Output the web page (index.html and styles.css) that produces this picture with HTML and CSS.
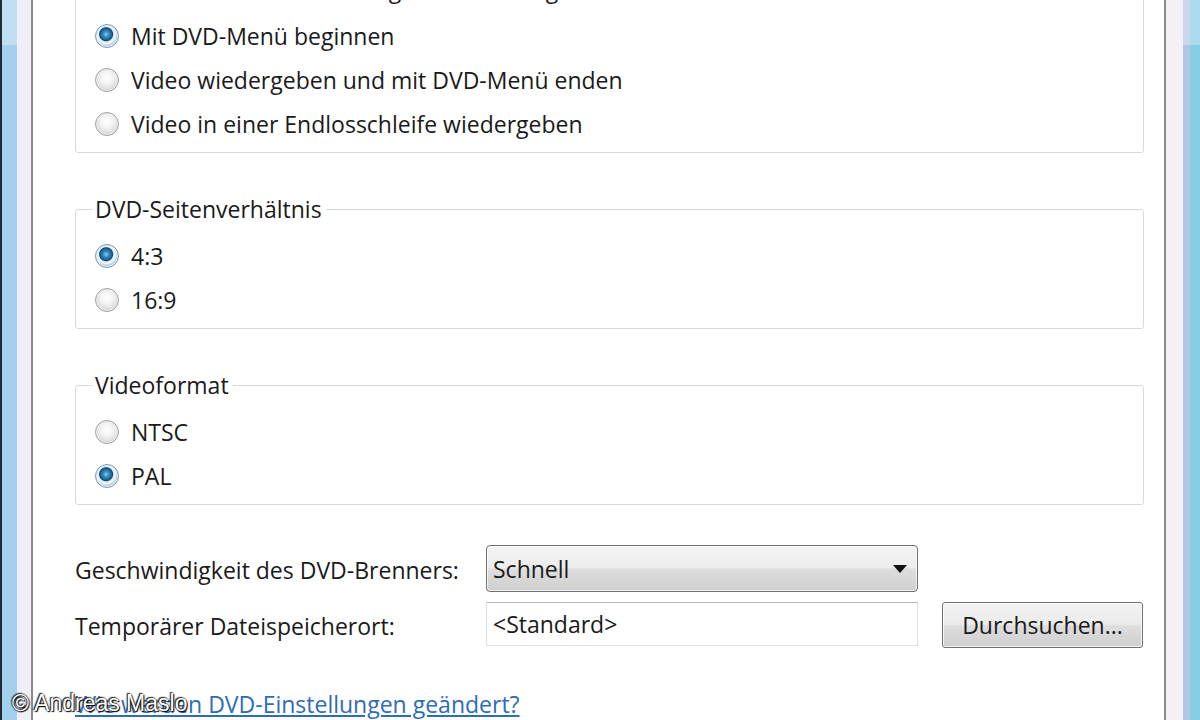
FILE: index.html
```html
<!DOCTYPE html>
<html lang="de">
<head>
<meta charset="utf-8">
<title>DVD-Optionen</title>
<link rel="stylesheet" href="styles.css">
</head>
<body>
<div class="window">
  <div class="frame frame-left"></div>
  <div class="dialog">
    <div class="content">
      <fieldset class="group">
        <legend>Wählen Sie die DVD-Wiedergabeeinstellungen</legend>
        <label class="opt"><span class="radio checked"></span>Mit DVD-Menü beginnen</label>
        <label class="opt"><span class="radio"></span>Video wiedergeben und mit DVD-Menü enden</label>
        <label class="opt"><span class="radio"></span>Video in einer Endlosschleife wiedergeben</label>
      </fieldset>
      <fieldset class="group">
        <legend>DVD-Seitenverhältnis</legend>
        <label class="opt"><span class="radio checked"></span>4:3</label>
        <label class="opt"><span class="radio"></span>16:9</label>
      </fieldset>
      <fieldset class="group">
        <legend>Videoformat</legend>
        <label class="opt"><span class="radio"></span>NTSC</label>
        <label class="opt"><span class="radio checked"></span>PAL</label>
      </fieldset>
      <div class="form">
        <span class="lbl">Geschwindigkeit des DVD-Brenners:</span>
        <div class="select"><span>Schnell</span><svg class="arrow" width="14" height="8" viewBox="0 0 14 8"><path d="M0 0H14L7 8Z" fill="#111"/></svg></div>
        <span></span>
        <span class="lbl">Temporärer Dateispeicherort:</span>
        <div class="input">&lt;Standard&gt;</div>
        <button class="btn">Durchsuchen...</button>
      </div>
      <a class="help" href="#">Wie werden DVD-Einstellungen geändert?</a>
    </div>
  </div>
  <div class="frame frame-right"></div>
  <div class="watermark">© Andreas Maslo</div>
</div>
</body>
</html>
```
FILE: styles.css
```css
html, body {
  margin: 0;
  padding: 0;
}
body {
  width: 1200px;
  height: 720px;
  overflow: hidden;
  font-family: "Open Sans", "Noto Sans", sans-serif;
  color: #222;
}
.window {
  position: relative;
  display: flex;
  height: 720px;
}
.frame-left {
  flex: none;
  width: 31px;
  border-right: 2px solid #8a8a8a;
  background:
    linear-gradient(to right, transparent 0 2px, rgba(255,255,255,0.3) 2px 17px, transparent 17px) top / 100% 45px no-repeat,
    linear-gradient(to right, #1f2a35 0 2px, #a3d0ec 2px 17px, #f0eef6 17px 31px);
}
.frame-right {
  flex: none;
  width: 34px;
  border-left: 2px solid #8a8a8a;
  background:
    linear-gradient(to right, transparent 0 17px, rgba(255,255,255,0.3) 17px) top / 100% 45px no-repeat,
    linear-gradient(to right, #f4f0f6 0 17px, #b4c6e8 17px 24px, #86cde6 24px 34px);
}
.dialog {
  flex: 1;
  background: #fff;
  overflow: hidden;
}
.content {
  margin-top: -26px;
  padding: 0 20px 0 42px;
  display: flex;
  flex-direction: column;
  gap: 41px;
}
.group {
  margin: 0;
  min-width: 0;
  border: 1px solid #d3dbe0;
  border-radius: 3px;
  padding: 10px 0 6px 19px;
}
.group legend {
  margin-left: -2px;
  padding: 0 4px 0 2px;
  font-size: 23px;
  line-height: 30px;
  color: #1a1a1a;
}
.opt {
  display: flex;
  align-items: center;
  height: 44px;
  font-size: 23px;
  color: #1a1a1a;
}
.radio {
  flex: none;
  box-sizing: border-box;
  width: 24px;
  height: 24px;
  margin-right: 12px;
  border-radius: 50%;
  border: 1px solid #9ea2a8;
  background: radial-gradient(circle at 50% 40%, #ffffff 0, #f3f3f3 35%, #d2d2d2 80%, #c4c4c4 100%);
  box-shadow: inset 0 0 0 1px #ececec;
}
.radio.checked {
  border-color: #7e9bb6;
  background: radial-gradient(circle at 46% 42%, #8fd0f0 0, #3a92c8 2.5px, #1f6c9e 5px, #16496c 6.5px, #d7e8f4 7.5px, #f4f9fc 9px, #bdd2e2 11px);
  box-shadow: inset 0 0 0 1px #e3eef6;
}
.form {
  margin-top: -1px;
  display: grid;
  grid-template-columns: 387px 432px 201px;
  column-gap: 24px;
  row-gap: 10px;
  font-size: 23px;
}
.lbl {
  align-self: center;
  padding-top: 2px;
  color: #1a1a1a;
  white-space: nowrap;
}
.select {
  box-sizing: border-box;
  height: 47px;
  border: 1px solid #707070;
  border-radius: 4px;
  background: linear-gradient(to bottom, #f4f4f4 0%, #ececec 48%, #dedede 52%, #cfcfcf 100%);
  box-shadow: inset 0 0 0 1px rgba(255,255,255,0.7);
  display: flex;
  align-items: center;
  justify-content: space-between;
  padding: 0 10px 0 6px;
  color: #1a1a1a;
}
.input {
  box-sizing: border-box;
  height: 44px;
  border: 1px solid #dde1e6;
  border-top-color: #b5b8bd;
  display: flex;
  align-items: center;
  padding-left: 6px;
  color: #1a1a1a;
}
.btn {
  box-sizing: border-box;
  height: 46px;
  border: 1px solid #707070;
  border-radius: 3px;
  background: linear-gradient(to bottom, #f3f3f3 0%, #ebebeb 48%, #dddddd 52%, #cfcfcf 100%);
  box-shadow: inset 0 0 0 1px rgba(255,255,255,0.75);
  font: inherit;
  font-size: 23px;
  color: #1a1a1a;
  padding: 0;
}
.help {
  align-self: flex-start;
  margin-top: 0;
  font-size: 23px;
  line-height: 30px;
  color: #2d6cb6;
  text-decoration: underline;
}
.watermark {
  position: absolute;
  left: 12px;
  top: 688px;
  font-family: "Liberation Sans", Arial, sans-serif;
  font-size: 23px;
  line-height: 30px;
  color: #fff;
  text-shadow: 0 0 2px #000, 1px 1px 1px #000, -1px -1px 1px #333;
}
```
